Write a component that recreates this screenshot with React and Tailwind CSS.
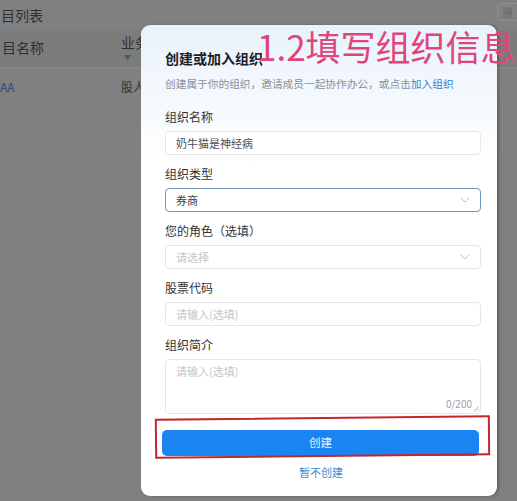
import React from 'react'

function Chevron() {
  return (
    <svg width="10" height="6" viewBox="0 0 10 6" fill="none" className="text-[#b8bcc4]">
      <path d="M1 1l4 4 4-4" stroke="currentColor" strokeWidth="1" strokeLinecap="round" strokeLinejoin="round" />
    </svg>
  )
}

function Field({ label, children }) {
  return (
    <div className="flex flex-col gap-[5px] mb-[10px]">
      <div className="text-[12px] leading-[18px] text-[#303339]">{label}</div>
      {children}
    </div>
  )
}

export default function App() {
  return (
    <div
      className="relative w-[517px] h-[501px] overflow-hidden bg-[#808080]"
      style={{ fontFamily: '"Noto Sans CJK SC", "Noto Sans", sans-serif' }}
    >
      {/* page behind the overlay */}
      <div className="h-[30px] flex items-center pl-[1px] text-[14px] text-[#303030]">目列表</div>
      <div className="h-[38px] bg-[#7c7c7c] flex items-start border-b border-[#8a8a8a]">
        <div className="w-[121px] pl-[2px] pt-[7px] text-[14px] text-[#303030]">目名称</div>
        <div className="pt-[2px] flex flex-col items-start">
          <span className="text-[14px] text-[#303030]">业务</span>
          <span className="ml-[3px] -mt-[1px] text-[7px] text-[#3d6b3d]">▼</span>
        </div>
      </div>
      <div className="h-[39px] flex items-center border-b border-[#858585]">
        <div className="w-[121px] text-[12px] text-[#2a4a80]">AA</div>
        <div className="text-[12px] text-[#333333]">股人</div>
      </div>
      <div className="absolute right-[-6px] top-[3px] w-[26px] h-[18px] border border-[#8e8e8e] rounded-[3px] bg-[#828282] flex items-center pl-[4px] text-[11px] leading-[12px] text-[#6a6a6a]">
        搜
      </div>

      {/* modal */}
      <div className="absolute left-[141px] top-[25px] w-[356px] h-[471px] rounded-[9px] bg-gradient-to-b from-[#e9f2fa] via-white via-30% to-white shadow-[2px_0_3px_rgba(0,0,0,0.25)] pl-[24px] pr-[16px] pt-[23px]">
        <div className="text-[14px] leading-[20px] font-bold text-[#1d2129]">创建或加入组织</div>
        <div className="mt-[8px] text-[10.7px] leading-[16px] text-[#8a8f99] whitespace-nowrap">
          创建属于你的组织，邀请成员一起协作办公，或点击<span className="text-[#2f86d1]">加入组织</span>
        </div>

        <div className="mt-[16px]">
          <Field label="组织名称">
            <div className="h-[24px] rounded-[4px] border border-[#e3e6eb] bg-white flex items-center px-[10px] text-[11px] text-[#4a4e57]">
              奶牛猫是神经病
            </div>
          </Field>
          <Field label="组织类型">
            <div className="h-[24px] rounded-[4px] border border-[#6c97c0] bg-white flex items-center justify-between px-[10px] text-[11px] text-[#3a3e46]">
              <span>券商</span>
              <Chevron />
            </div>
          </Field>
          <Field label="您的角色（选填）">
            <div className="h-[24px] rounded-[4px] border border-[#e3e6eb] bg-white flex items-center justify-between px-[10px] text-[11px] text-[#c2c6cc]">
              <span>请选择</span>
              <Chevron />
            </div>
          </Field>
          <Field label="股票代码">
            <div className="h-[24px] rounded-[4px] border border-[#e3e6eb] bg-white flex items-center px-[10px] text-[11px] text-[#c2c6cc]">
              请输入(选填)
            </div>
          </Field>
          <Field label="组织简介">
            <div className="relative h-[55px] rounded-[4px] border border-[#e3e6eb] bg-white px-[10px] pt-[3px] text-[11px] text-[#c2c6cc]">
              请输入(选填)
              <span className="absolute right-[8px] bottom-[2px] text-[10px] text-[#9aa0a8]">0/200</span>
              <svg className="absolute right-[1px] bottom-[1px]" width="6" height="6" viewBox="0 0 6 6">
                <path d="M5.5 0.5L0.5 5.5M5.5 3L3 5.5" stroke="#9aa0a8" strokeWidth="0.8" />
              </svg>
            </div>
          </Field>
        </div>

        <div className="mt-[16px] mr-[2px] -ml-[3px] h-[26px] rounded-[5px] bg-[#1a84f2] flex items-center justify-center text-[11.5px] text-[#e8f2ff]">
          创建
        </div>
        <div className="mt-[8px] text-center text-[11px] text-[#3a8fd0] -ml-[4px]">暂不创建</div>

        {/* red highlight box */}
        <div className="absolute left-[14px] top-[392px] w-[335px] h-[40px] border-2 border-[#c1262c] -rotate-[0.6deg]" />
      </div>

      {/* annotation */}
      <div className="absolute left-[257px] top-[24px] text-[35px] leading-[44px] text-[#e0447c] whitespace-nowrap">
        1.2填写组织信息
      </div>
    </div>
  )
}
